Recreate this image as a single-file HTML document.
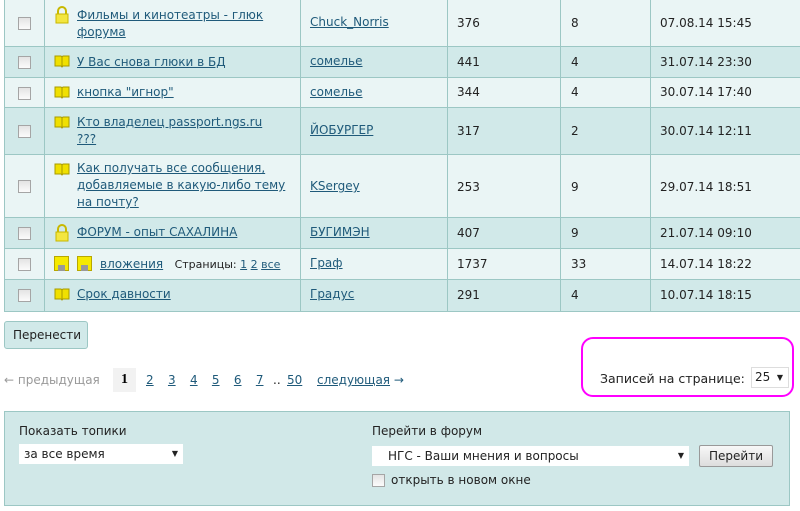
<!DOCTYPE html>
<html><head><meta charset="utf-8"><style>
*{margin:0;padding:0;box-sizing:border-box}
body{width:800px;height:511px;background:#fff;font-family:"DejaVu Sans","Liberation Sans",sans-serif;font-size:12px;color:#222;position:relative;overflow:hidden}
.a{position:absolute}
a{color:#1f5a7a;text-decoration:underline}
.row{position:absolute;left:4px;width:796px;border-bottom:1px solid #9cc7c4}
.l{background:#eaf5f5}.d{background:#d1e9e9}
.vl{position:absolute;top:0;width:1px;height:312px;background:#9cc7c4}
.cb{position:absolute;left:18px;width:13px;height:13px;border:1px solid #a5a5a5;background:linear-gradient(#e4e4e4,#fbfbfb)}
.t{position:absolute;left:77px;line-height:17px}
.c{position:absolute}
</style></head><body>
<div class="row l" style="top:0;height:47px"></div>
<div class="row d" style="top:47px;height:31px"></div>
<div class="row l" style="top:78px;height:30px"></div>
<div class="row d" style="top:108px;height:47px"></div>
<div class="row l" style="top:155px;height:63px"></div>
<div class="row d" style="top:218px;height:31px"></div>
<div class="row l" style="top:249px;height:31px"></div>
<div class="row d" style="top:280px;height:32px"></div>
<div class="vl" style="left:4px"></div>
<div class="vl" style="left:44px"></div>
<div class="vl" style="left:300px"></div>
<div class="vl" style="left:447px"></div>
<div class="vl" style="left:560px"></div>
<div class="vl" style="left:650px"></div>

<svg class="a" style="left:0;top:0" width="100" height="312">
<defs>
<g id="bk"><path d="M1 1h6l1 1 1-1h6v10H9l-1 1-1-1H1z" fill="#f0e000" stroke="#a89a00"/><path d="M8 2v9" stroke="#a89a00"/></g>
<g id="lk"><path d="M4 7V4a4 4 0 0 1 8 0v3" fill="none" stroke="#c8b800" stroke-width="2"/><rect x="2" y="7" width="12" height="9" fill="#f3e640" stroke="#c8b800"/></g>
<g id="fl"><rect x="0.5" y="0.5" width="14" height="14" fill="#f6ea00" stroke="#b8a800"/><rect x="4" y="9" width="7" height="6" fill="#999"/></g>
</defs>
<use href="#lk" x="54" y="7"/>
<use href="#bk" x="54" y="55"/>
<use href="#bk" x="54" y="86"/>
<use href="#bk" x="54" y="116"/>
<use href="#bk" x="54" y="163"/>
<use href="#lk" x="54" y="225"/>
<use href="#fl" x="54" y="256"/>
<use href="#fl" x="77" y="256"/>
<use href="#bk" x="54" y="288"/>
</svg>

<div class="cb" style="top:17px"></div>
<div class="cb" style="top:56px"></div>
<div class="cb" style="top:87px"></div>
<div class="cb" style="top:125px"></div>
<div class="cb" style="top:180px"></div>
<div class="cb" style="top:227px"></div>
<div class="cb" style="top:258px"></div>
<div class="cb" style="top:289px"></div>

<div class="t" style="top:7px"><a>Фильмы и кинотеатры - глюк<br>форума</a></div>
<div class="t" style="top:54px"><a>У Вас снова глюки в БД</a></div>
<div class="t" style="top:84px"><a>кнопка "игнор"</a></div>
<div class="t" style="top:114px"><a>Кто владелец passport.ngs.ru<br>???</a></div>
<div class="t" style="top:160px"><a>Как получать все сообщения,<br>добавляемые в какую-либо тему<br>на почту?</a></div>
<div class="t" style="top:224px"><a>ФОРУМ - опыт САХАЛИНА</a></div>
<div class="t" style="top:256px;left:100px"><a>вложения</a> &nbsp; <span style="font-size:11px">Страницы: <a>1</a> <a>2</a> <a>все</a></span></div>
<div class="t" style="top:286px"><a>Срок давности</a></div>

<div class="c" style="left:310px;top:15px"><a>Chuck_Norris</a></div>
<div class="c" style="left:310px;top:54px"><a>сомелье</a></div>
<div class="c" style="left:310px;top:85px"><a>сомелье</a></div>
<div class="c" style="left:310px;top:123px"><a>ЙОБУРГЕР</a></div>
<div class="c" style="left:310px;top:179px"><a>KSergey</a></div>
<div class="c" style="left:310px;top:225px"><a>БУГИМЭН</a></div>
<div class="c" style="left:310px;top:256px"><a>Граф</a></div>
<div class="c" style="left:310px;top:287px"><a>Градус</a></div>

<div class="c" style="left:457px;top:16px">376</div>
<div class="c" style="left:457px;top:55px">441</div>
<div class="c" style="left:457px;top:85px">344</div>
<div class="c" style="left:457px;top:124px">317</div>
<div class="c" style="left:457px;top:180px">253</div>
<div class="c" style="left:457px;top:226px">407</div>
<div class="c" style="left:457px;top:257px">1737</div>
<div class="c" style="left:457px;top:288px">291</div>

<div class="c" style="left:571px;top:16px">8</div>
<div class="c" style="left:571px;top:55px">4</div>
<div class="c" style="left:571px;top:85px">4</div>
<div class="c" style="left:571px;top:124px">2</div>
<div class="c" style="left:571px;top:180px">9</div>
<div class="c" style="left:571px;top:226px">9</div>
<div class="c" style="left:571px;top:257px">33</div>
<div class="c" style="left:571px;top:288px">4</div>

<div class="c" style="left:660px;top:16px">07.08.14 15:45</div>
<div class="c" style="left:660px;top:55px">31.07.14 23:30</div>
<div class="c" style="left:660px;top:85px">30.07.14 17:40</div>
<div class="c" style="left:660px;top:124px">30.07.14 12:11</div>
<div class="c" style="left:660px;top:180px">29.07.14 18:51</div>
<div class="c" style="left:660px;top:226px">21.07.14 09:10</div>
<div class="c" style="left:660px;top:257px">14.07.14 18:22</div>
<div class="c" style="left:660px;top:288px">10.07.14 18:15</div>

<div class="a" style="left:4px;top:321px;width:84px;height:28px;background:#d1e9e9;border:1px solid #9cc7c4;border-radius:3px;line-height:26px;padding-left:8px">Перенести</div>

<div class="a" style="left:4px;top:373px;color:#999">← предыдущая</div>
<div class="a" style="left:113px;top:368px;width:23px;height:24px;background:#f2f2f2;font-family:'Liberation Serif',serif;font-weight:bold;font-size:14px;line-height:24px;text-align:center;color:#000">1</div>
<div class="a" style="left:146px;top:373px;word-spacing:10.5px"><a>2</a> <a>3</a> <a>4</a> <a>5</a> <a>6</a> <a>7</a></div>
<div class="a" style="left:273px;top:373px">..</div>
<div class="a" style="left:287px;top:373px"><a>50</a></div>
<div class="a" style="left:317px;top:373px"><a>следующая</a> <span style="color:#1f5a7a">→</span></div>

<div class="a" style="left:581px;top:337px;width:213px;height:60px;border:2px solid #f0f;border-radius:12px"></div>
<div class="a" style="left:600px;top:371px;font-size:12.5px">Записей на странице:</div>
<div class="a" style="left:751px;top:367px;width:38px;height:21px;border:1px solid #ddd;background:#fff;padding-left:3px;line-height:19px">25<span style="position:absolute;right:5px;top:0;font-size:8px">▼</span></div>

<div class="a" style="left:4px;top:411px;width:786px;height:95px;background:#d1e8e8;border:1px solid #9cc7c4"></div>
<div class="a" style="left:19px;top:424px">Показать топики</div>
<div class="a" style="left:19px;top:444px;width:164px;height:20px;background:#fff;padding-left:5px;line-height:20px">за все время<span style="position:absolute;right:5px;top:0;font-size:8px">▼</span></div>
<div class="a" style="left:372px;top:424px">Перейти в форум</div>
<div class="a" style="left:372px;top:446px;width:317px;height:20px;background:#fff;padding-left:16px;line-height:20px">НГС - Ваши мнения и вопросы<span style="position:absolute;right:5px;top:0;font-size:8px">▼</span></div>
<div class="a" style="left:699px;top:445px;width:74px;height:22px;border:1px solid #999;border-radius:2px;background:linear-gradient(#f8f8f8,#ddd);text-align:center;line-height:20px">Перейти</div>
<div class="a" style="left:372px;top:474px;width:13px;height:13px;border:1px solid #a5a5a5;background:linear-gradient(#e4e4e4,#fbfbfb)"></div>
<div class="a" style="left:391px;top:473px">открыть в новом окне</div>
</body></html>
